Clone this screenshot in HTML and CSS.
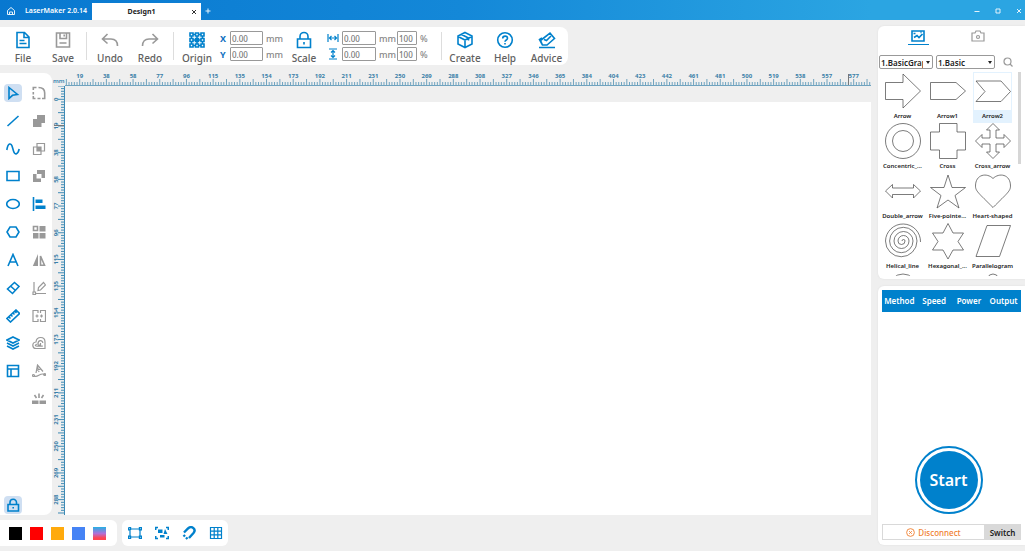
FILE: index.html
```
<!DOCTYPE html>
<html lang="en">
<head>
<meta charset="UTF-8" />
<meta name="viewport" content="width=device-width, initial-scale=1" />
<title>LaserMaker 2.0.14</title>
<link rel="stylesheet" href="styles.css">
</head>
<body>

<header class="titlebar">
  <button class="title-button home" aria-label="Home">
    <svg viewBox="0 0 10 10" width="10" height="10"><path d="M1.500 4.500L5 1.500l3.500 3V8.500h-7zM3.500 8.500V6h3v2.500"/></svg>
  </button>
  <h1 class="app-name">LaserMaker 2.0.14</h1>
  <div class="tab">
    <span class="tab-name">Design1</span>
    <button class="tab-close" aria-label="Close tab"><svg viewBox="0 0 6 6" width="6" height="6"><path d="M1 1l4 4M5 1L1 5"/></svg></button>
  </div>
  <button class="title-button add" aria-label="New tab"><svg viewBox="0 0 6 6" width="6" height="6"><path d="M3 .500v5M.500 3h5"/></svg></button>
  <div class="window-buttons">
    <button class="title-button" aria-label="Minimize"><svg viewBox="0 0 6 6" width="6" height="6"><path d="M.500 3.500h5"/></svg></button>
    <button class="title-button" aria-label="Maximize"><svg viewBox="0 0 6 6" width="6" height="6"><path d="M1 1h4v4H1z"/></svg></button>
    <button class="title-button" aria-label="Close"><svg viewBox="0 0 6 6" width="6" height="6"><path d="M1 1l4 4M5 1L1 5"/></svg></button>
  </div>
</header>

<div class="app">
  <main class="main">

    <!-- top toolbar -->
    <div class="toolbar">
      <button class="tool">
        <svg class="blue" viewBox="0 0 18 18" width="18" height="18"><path d="M3 1.500h7.500L15 6v10.500H3zM10 2v4.500h4.500M5.500 9.500h5M5.500 12.500h7"/></svg>
        File
      </button>
      <button class="tool">
        <svg class="grey" viewBox="0 0 18 18" width="18" height="18"><path d="M2.500 2h13v14h-13zM6 2v5.500h6.500V2M5.500 12h7M10.200 3.500v2"/></svg>
        Save
      </button>
      <span class="separator"></span>
      <button class="tool">
        <svg class="grey" viewBox="0 0 18 18" width="18" height="18"><path d="M6.500 3L1.500 8l5 4.500M2 8h8c4 0 6.500 2.500 6.500 7"/></svg>
        Undo
      </button>
      <button class="tool">
        <svg class="grey" viewBox="0 0 18 18" width="18" height="18"><path d="M11.500 3l5 5-5 4.500M16 8H8c-4 0-6.500 2.500-6.500 7"/></svg>
        Redo
      </button>
      <span class="separator"></span>
      <button class="tool">
        <svg class="blue" viewBox="0 0 18 18" width="18" height="18"><path d="M2 2h3v3H2zM7.500 2h3v3h-3zM13 2h3v3h-3zM2 7.500h3v3H2zM13 7.500h3v3h-3zM2 13h3v3H2zM7.500 13h3v3h-3zM13 13h3v3h-3zM5 3.500h2.500M10.500 3.500H13M5 9h8M5 14.500h2.500M10.500 14.500H13M3.500 5v2.500M3.500 10.500V13M14.500 5v2.500M14.500 10.500V13M9 5v8"/><path class="solid" d="M7.500 7.500h3v3h-3z"/></svg>
        Origin
      </button>
      <div class="fields position">
        <label for="pos-x">X</label><input id="pos-x" class="wide" value="0.00"><span>mm</span>
        <label for="pos-y">Y</label><input id="pos-y" class="wide" value="0.00"><span>mm</span>
      </div>
      <button class="tool">
        <svg class="blue" viewBox="0 0 18 18" width="18" height="18"><path d="M2.500 8h13v8.500h-13zM5 8V5.500a4 4 0 0 1 8 0V8M9 11v2.500"/></svg>
        Scale
      </button>
      <div class="fields size">
        <label for="width" aria-label="Width"><svg class="blue thin" viewBox="0 0 12 12" width="12" height="12"><path d="M1 2v8M11 2v8M2.500 6h7M4.500 4l-2 2 2 2M7.500 4l2 2-2 2"/></svg></label>
        <input id="width" class="wide" value="0.00"><span>mm</span>
        <input class="narrow" aria-label="Width percent" value="100"><span>%</span>
        <label for="height" aria-label="Height"><svg class="blue thin" viewBox="0 0 12 12" width="12" height="12"><path d="M2 1h8M2 11h8M6 2.500v7M4 4.500l2-2 2 2M4 7.500l2 2 2-2"/></svg></label>
        <input id="height" class="wide" value="0.00"><span>mm</span>
        <input class="narrow" aria-label="Height percent" value="100"><span>%</span>
      </div>
      <span class="separator"></span>
      <button class="tool">
        <svg class="blue" viewBox="0 0 18 18" width="18" height="18"><path d="M9 1.500l7 3.500v8l-7 3.500L2 13V5zM2 5.500L9 9l7-3.500M9 9v7.500M5.500 3.500l7 3.500v2.500"/></svg>
        Create
      </button>
      <button class="tool">
        <svg class="blue" viewBox="0 0 18 18" width="18" height="18"><circle cx="9" cy="9" r="7.300"/><path d="M6.700 7.500c0-3.200 4.800-3 4.800-.2 0 1.700-2.500 1.700-2.500 3.500M9 12v1.500"/></svg>
        Help
      </button>
      <button class="tool last">
        <svg class="blue" viewBox="0 0 18 18" width="18" height="18"><path d="M1 16.500h16M4.500 14L1.500 8.500 4 7M2.500 9.500L12 2l4.500 5.500L9 14H4.500zM6 8.500l2.500 1 4.500-4.500"/></svg>
        Advice
      </button>
    </div>

    <div class="workspace">
      <!-- drawing tools -->
      <div class="side-tools">
        <div class="tool-grid">
          <button class="icon active" aria-label="Select"><svg class="blue" viewBox="0 0 14 14" width="14" height="14"><path d="M3 1.500l8.500 7-5 .800L3 12.500z"/></svg></button>
          <button class="icon" aria-label="Round corner"><svg class="grey" viewBox="0 0 14 14" width="14" height="14"><path d="M6.500 1.500c4.500 0 6.200 2 6.200 5.500v5.500H10M4.500 1.500H1.300v2.500M1.300 6v2.500M1.300 10v2.500H3.500M5.500 12.500h3"/></svg></button>
          <button class="icon" aria-label="Line"><svg class="blue" viewBox="0 0 14 14" width="14" height="14"><path d="M1.500 12L12.500 2"/></svg></button>
          <button class="icon" aria-label="Union"><svg class="grey" viewBox="0 0 14 14" width="14" height="14"><path class="fill" d="M5 1h8v8H9.500v4H1V5h4z"/></svg></button>
          <button class="icon" aria-label="Curve"><svg class="blue" viewBox="0 0 14 14" width="14" height="14"><path d="M.800 8C2 1 5 0 6.500 5.500l1 3.500c1.500 5 4.500 3 5.700-2"/></svg></button>
          <button class="icon" aria-label="Intersect"><svg class="grey thin" viewBox="0 0 14 14" width="14" height="14"><path d="M5 1.500h7.500V9H5zM1.500 5H9v7.500H1.500z"/><path class="fill" d="M5 5h4v4H5z"/></svg></button>
          <button class="icon" aria-label="Rectangle"><svg class="blue" viewBox="0 0 14 14" width="14" height="14"><path d="M1 2.500h12v9H1z"/></svg></button>
          <button class="icon" aria-label="Subtract"><svg class="grey" viewBox="0 0 14 14" width="14" height="14"><path class="fill" d="M5 1h8v8H9.500V5H5zM1 5h3.500v4.500H9V13H1z"/></svg></button>
          <button class="icon" aria-label="Ellipse"><svg class="blue" viewBox="0 0 14 14" width="14" height="14"><ellipse cx="7" cy="7" rx="6.300" ry="4.500"/></svg></button>
          <button class="icon" aria-label="Align"><svg class="blue" viewBox="0 0 14 14" width="14" height="14"><path d="M1.500 0v14"/><path class="fill" d="M3.500 2.500h7V6h-7zM3.500 8.500h10V12h-10z"/></svg></button>
          <button class="icon" aria-label="Polygon"><svg class="blue" viewBox="0 0 14 14" width="14" height="14"><path d="M4 2h6l3 5-3 5H4L1 7z"/></svg></button>
          <button class="icon" aria-label="Array"><svg class="grey" viewBox="0 0 14 14" width="14" height="14"><path d="M1.500 1.500h4v4h-4z"/><path class="fill" d="M7.500 1h6v5.500h-6zM1 8h5.500v5.500H1zM7.500 8h6v5.500h-6z"/></svg></button>
          <button class="icon" aria-label="Text"><svg class="blue" viewBox="0 0 14 14" width="14" height="14"><path d="M2 13L7 1.500 12 13M4 9h6"/></svg></button>
          <button class="icon" aria-label="Mirror"><svg class="grey" viewBox="0 0 14 14" width="14" height="14"><path class="fill" d="M6 1v12H.800z"/><path d="M8.500 3v9.300h4z"/></svg></button>
          <button class="icon" aria-label="Eraser"><svg class="blue" viewBox="0 0 14 14" width="14" height="14"><path d="M8.500 1.500l4.500 4-6.500 7L1.500 8zM4.500 5l5 4.500"/></svg></button>
          <button class="icon" aria-label="Edit nodes"><svg class="grey thin" viewBox="0 0 14 14" width="14" height="14"><path d="M2 1v10M3.500 12.500H14M1 11h2.500v2.500H1zM6 9.500l.500-3 5-5L13.500 4l-5 5z"/></svg></button>
          <button class="icon" aria-label="Ruler"><svg class="blue" viewBox="0 0 14 14" width="14" height="14"><path d="M10 1l3.500 3.500L4.500 13 1 9.500zM5 6l1.500 1.500M7 4l1.500 1.500M9 2.500L10.500 4M3 8l1.500 1.500"/></svg></button>
          <button class="icon" aria-label="Split"><svg class="grey thin" viewBox="0 0 14 14" width="14" height="14"><path d="M6 4V1.500H1v11h5V10M8.500 4V1.500h5v11h-5V10M3.500 7h3M8 7h3M5 5.500v3M9.500 5.500v3"/></svg></button>
          <button class="icon" aria-label="Layers"><svg class="blue" viewBox="0 0 14 14" width="14" height="14"><path d="M7 1l6 3-6 3-6-3zM1 7l6 3 6-3M1 10l6 3 6-3"/></svg></button>
          <button class="icon" aria-label="Offset"><svg class="grey thin" viewBox="0 0 14 14" width="14" height="14"><path d="M13 12.500H4C0 12.500-.500 6.500 4 6c.500-6 9-6 9 0zM10.800 10.200H5C2.500 10.200 3 8 6 8c0-4.500 4.800-4 4.800-1M6 9.200h2.500V7"/></svg></button>
          <button class="icon" aria-label="Table"><svg class="blue" viewBox="0 0 14 14" width="14" height="14"><path d="M1.500 1.500h11v11h-11zM1.500 5h11M5 5v7.500"/></svg></button>
          <button class="icon" aria-label="Text on path"><svg class="grey thin" viewBox="0 0 14 14" width="14" height="14"><path d="M4 9L5.500 1 11 7.500M4.500 6.500L9 5M5.500 3L7 8M2 12c4 2 6-4 11-1.500"/><circle cx="1.500" cy="11.500" r="1"/><circle cx="12.700" cy="10.500" r="1"/></svg></button>
          <span></span>
          <button class="icon" aria-label="Break"><svg class="grey" viewBox="0 0 14 14" width="14" height="14"><path class="fill" d="M0 8.500h6.500V12H0zM7.500 8.500H14V12H7.500z"/><path d="M7 1.500v4.500M2.500 3l2 3M11.500 3l-2 3"/></svg></button>
        </div>
        <button class="icon active" aria-label="Lock"><svg class="blue" viewBox="0 0 14 14" width="14" height="14"><path d="M2 6.500h10.500v6.500H2zM4 6.500V4.500a3.200 3.200 0 0 1 6.500 0v2M7.200 9v1.500"/></svg></button>
      </div>

      <div class="board">
        <span class="unit">mm</span>
        <svg class="ruler-top" id="ruler-top"></svg>
        <svg class="ruler-left" id="ruler-left"></svg>
        <div class="canvas"></div>
      </div>
    </div>

    <!-- bottom bars -->
    <footer class="bottom">
      <div class="swatches">
        <button class="swatch black" aria-label="Black"></button>
        <button class="swatch red" aria-label="Red"></button>
        <button class="swatch orange" aria-label="Orange"></button>
        <button class="swatch blue-fill" aria-label="Blue"></button>
        <button class="swatch rainbow" aria-label="More colours"></button>
      </div>
      <div class="view-tools">
        <button class="view" aria-label="Frame"><svg class="blue thin" viewBox="0 0 14 14" width="14" height="14"><path d="M2 3h10v8H2zM.600 1.500h2V4M.600 1.500V4h2M11.400 1.500h2V4h-2zM.600 10h2v2.500h-2zM11.400 10h2v2.500h-2z"/></svg></button>
        <button class="view" aria-label="Select all"><svg class="blue" viewBox="0 0 14 14" width="14" height="14"><path d="M.700 4V1.500H3M11 1.500h2.300V4M.700 10v2.500H3M11 12.500h2.300V10"/><path class="fill" d="M3 3.500h4.500V7H3zM10 3l2.500 5h-4zM5 9h4.500v2.500H5z"/></svg></button>
        <button class="view" aria-label="Snap"><svg class="blue heavy" viewBox="0 0 14 14" width="14" height="14"><path d="M2 6.500l4-4c4-3.500 8.500 1 5.500 4.500L7 12M1.500 9l1.500 1.500M4 11.500L5.500 13"/></svg></button>
        <button class="view" aria-label="Grid"><svg class="blue thin" viewBox="0 0 14 14" width="14" height="14"><path d="M1.500 1.500h11v11h-11zM5.200 1.500v11M8.800 1.500v11M1.500 5.200h11M1.500 8.800h11"/></svg></button>
      </div>
    </footer>
  </main>

  <aside class="sidebar">
    <section class="library">
      <div class="library-tabs">
        <button class="library-tab current" aria-label="Graphics"><svg class="blue" viewBox="0 0 14 12" width="14" height="12"><path d="M1 1h12v10H1zM3 7.500l3-2 2 2L11.500 4M2.500 3.500h2M9.500 2.500h1"/></svg></button>
        <button class="library-tab" aria-label="Camera"><svg class="grey thin" viewBox="0 0 14 12" width="14" height="12"><path d="M1 3h3l1-2h4l1 2h3v8H1z"/><circle cx="7" cy="7" r="1.500"/></svg></button>
      </div>
      <div class="filters">
        <span class="select first"><select aria-label="Library"><option>1.BasicGraphics</option></select></span>
        <span class="select second"><select aria-label="Category"><option>1.Basic</option></select></span>
        <button class="search" aria-label="Search"><svg class="grey thin" viewBox="0 0 10 10" width="10" height="10"><circle cx="4.500" cy="4.500" r="3.500"/><path d="M7 7l2.500 2.500"/></svg></button>
      </div>
      <div class="shape-scroll">
        <div class="shapes">
          <button class="shape"><svg viewBox="0 0 36 36"><path d="M.500 9.500h17.500V1l17.500 17L18 35v-8.500H.500z"/></svg><span>Arrow</span></button>
          <button class="shape"><svg viewBox="0 0 36 36"><path d="M.500 9.500H26l9.500 8.500-9.500 8.500H.500z"/></svg><span>Arrow1</span></button>
          <button class="shape selected"><svg viewBox="0 0 36 36"><path d="M1 8h25l9.500 10.500L26 28.500H1l9-10z"/></svg><span>Arrow2</span></button>
          <button class="shape"><svg viewBox="0 0 36 36"><circle cx="18" cy="18" r="17.500"/><circle cx="18" cy="18" r="10.500"/></svg><span>Concentric_...</span></button>
          <button class="shape"><svg viewBox="0 0 36 36"><path d="M9.500.500h17.500v8.500h8.500v18H27v8.500H9.500V27H.500V9h9z"/></svg><span>Cross</span></button>
          <button class="shape"><svg viewBox="0 0 36 36"><path d="M18 .500l6.500 6.500H21v8h8v-3.500l6.500 6.500-6.500 6.500V21h-8v8h3.500L18 35.500 11.500 29H15v-8H7v3.500L.500 18 7 11.500V15h8V7h-3.500z"/></svg><span>Cross_arrow</span></button>
          <button class="shape"><svg viewBox="0 0 36 36"><path d="M.500 18l7-6.500v3.500h21v-3.500l7 6.500-7 7v-3.500h-21V25z"/></svg><span>Double_arrow</span></button>
          <button class="shape"><svg viewBox="0 0 36 36"><path d="M18 2l4 12.500h13.500L25 22.500 29 35l-11-8-11 8 4-12.500L.500 14.500H14z"/></svg><span>Five-pointe...</span></button>
          <button class="shape"><svg viewBox="0 0 36 36"><path d="M18 5.500C12-.500.500 1 .500 13c0 5 3 7 17.500 21.500C32.500 20 35.500 18 35.500 13 35.500 1 24-.500 18 5.500z"/></svg><span>Heart-shaped</span></button>
          <button class="shape"><svg viewBox="0 0 36 36"><path d="M17 18A1.500 1.500 0 0 1 20 18A3.500 3.500 0 0 1 13 18A5.500 5.500 0 0 1 24 18A7.500 7.500 0 0 1 9 18A9.500 9.500 0 0 1 28 18A11.700 11.700 0 0 1 4.600 18A13.700 13.700 0 0 1 32 18A15.700 15.700 0 0 1 .500 18A17.500 17.500 0 0 1 35.500 19"/></svg><span>Helical_line</span></button>
          <button class="shape"><svg viewBox="0 0 36 36"><path d="M18 .500l5 9.500h10.500L28 18.500 33.500 27H23l-5 9-5-9H2.500L8 18.500 2.500 10H13z"/></svg><span>Hexagonal_...</span></button>
          <button class="shape"><svg viewBox="0 0 36 36"><path d="M12 2.500h23.500L24.500 33.500H1z"/></svg><span>Parallelogram</span></button>
          <button class="shape" aria-label="Circle"><svg viewBox="0 0 36 36"><ellipse cx="18" cy="15" rx="14" ry="14"/></svg></button>
          <span></span>
          <button class="shape" aria-label="Drop"><svg viewBox="0 0 36 36"><path d="M14.500 2q3.500-2 7 0L35 30H1z"/></svg></button>
        </div>
        <div class="scrollbar"></div>
      </div>
    </section>

    <section class="job">
      <table class="layers">
        <thead><tr><th>Method</th><th>Speed</th><th>Power</th><th>Output</th></tr></thead>
      </table>
      <button class="start"><span>Start</span></button>
      <div class="connection">
        <span class="status"><svg viewBox="0 0 10 10" width="9" height="9"><circle cx="5" cy="5" r="4.300"/><path d="M3.500 3.500l3 3M6.500 3.500l-3 3"/></svg>Disconnect</span>
        <button class="switch">Switch</button>
      </div>
    </section>
  </aside>
</div>

<script src="ruler.js"></script>
</body>
</html>
```
FILE: styles.css
```
* {
  margin: 0; padding: 0; box-sizing: border-box;
}
html, body {
  height: 100%;
}
body {
  display: flex;
  flex-direction: column;
  background: #efefef;
  font-family: "Noto Sans", "Open Sans", sans-serif;
  overflow: hidden;
}
button {
  border: 0;
  background: none;
  font-family: inherit;
  cursor: pointer;
}
svg {
  display: block;
  fill: none;
  stroke: currentColor;
  stroke-width: 1.6;
}
.blue { color: #0081cc; }
.grey { color: #999; }
.thin { stroke-width: 1.2; }
.heavy { stroke-width: 2.4; }
.fill { fill: currentColor; stroke: none; }
.solid { fill: currentColor; }

/* Title bar */
.titlebar {
  display: flex;
  align-items: center;
  height: 20px;
  padding-top: 2px;
  flex-shrink: 0;
  background: linear-gradient(to right, #0878d0, #1488d8 45%, #2ba5e2 85%);
  color: #fff;
}
.title-button {
  display: flex;
  align-items: center;
  justify-content: center;
  color: #e4f2fb;
}
.title-button svg, .tab-close svg {
  stroke-width: 1;
}
.home {
  width: 22px;
  margin-right: 3px;
}
.app-name {
  width: 67px;
  font-size: 7px;
  line-height: 10px;
  font-weight: 600;
  white-space: nowrap;
}
.tab {
  display: flex;
  align-items: center;
  align-self: flex-end;
  width: 109px;
  height: 17px;
  padding-right: 4px;
  background: #fff;
  color: #222;
}
.tab-name {
  flex: 1;
  text-align: center;
  font-size: 7px;
  line-height: 10px;
  font-weight: 700;
}
.tab-close {
  color: #333;
}
.add {
  width: 14px;
}
.window-buttons {
  display: flex;
  gap: 15px;
  margin-left: auto;
  padding-right: 3px;
}

.app {
  display: flex;
  flex: 1;
  min-height: 0;
}
.main {
  display: flex;
  flex-direction: column;
  flex: 1;
  min-width: 0;
  padding: 7px 7px 5px 0;
}

/* Toolbar */
.toolbar {
  display: flex;
  align-items: center;
  align-self: flex-start;
  height: 38px;
  padding-left: 3px;
  background: #fff;
  border-radius: 0 8px 8px 0;
}
.tool {
  display: flex;
  flex-direction: column;
  align-items: center;
  gap: 3px;
  width: 40px;
  padding-top: 3px;
  font-size: 10px;
  line-height: 13px;
  font-weight: 500;
  color: #606060;
}
.last {
  width: 43px;
}
.separator {
  width: 1px;
  height: 28px;
  margin: 0 3px;
  background: #ddd;
}
.fields {
  display: grid;
  align-items: center;
  gap: 2px 3px;
  font-size: 9px;
  line-height: 13px;
  font-weight: 500;
  color: #888;
}
.position {
  grid-template-columns: 7px 33px 15px;
  padding: 0 3px;
}
.position label {
  font-size: 9px;
  font-weight: 700;
  color: #0d6fc0;
}
.size {
  grid-template-columns: 12px 34px 15px 20px 9px;
  padding: 0 9px 0 3px;
}
.fields input {
  width: 100%;
  height: 14px;
  padding: 0 1px;
  border: 1px solid #999;
  border-radius: 1px;
  background: #fff;
  font-family: inherit;
  font-size: 8px;
  font-weight: 500;
  color: #777;
}

/* Left tools */
.workspace {
  display: flex;
  flex: 1;
  min-height: 0;
  margin-top: 8px;
}
.side-tools {
  display: flex;
  flex-direction: column;
  justify-content: space-between;
  width: 52px;
  padding: 11px 4px 1px;
  background: #fff;
  border-radius: 0 8px 8px 0;
}
.tool-grid {
  display: grid;
  grid-template-columns: 18px 18px;
  grid-auto-rows: 18px;
  column-gap: 8px;
  align-content: space-between;
  height: 324px;
}
.icon {
  display: flex;
  align-items: center;
  justify-content: center;
  width: 18px;
  height: 18px;
  border-radius: 4px;
}
.icon.active {
  background: #cfdff2;
}

/* Rulers and canvas */
.board {
  display: grid;
  grid-template-columns: 13px 1fr;
  grid-template-rows: 13px 1fr;
  flex: 1;
  min-width: 0;
}
.unit {
  align-self: end;
  padding-left: 1px;
  font-size: 6px;
  line-height: 10px;
  font-weight: 600;
  color: #2f7fae;
}
.ruler-top, .ruler-left {
  width: 100%;
  height: 100%;
  overflow: hidden;
  stroke-width: 1;
}
.ruler-top { color: #6fa3bf; }
.ruler-left { color: #3f8bb5; }
.ruler-top text, .ruler-left text {
  stroke: none;
  fill: #3b7fa8;
  font-size: 6px;
  font-weight: 700;
  text-anchor: middle;
}
.cursor-mark {
  stroke: #777;
}
.canvas {
  margin-top: 16px;
  background: #fff;
}

/* Bottom bars */
.bottom {
  display: flex;
  gap: 5px;
  height: 26px;
  margin-top: 5px;
}
.swatches, .view-tools {
  display: flex;
  align-items: center;
  background: #fff;
}
.swatches {
  gap: 8px;
  padding: 0 11px 0 9px;
  border-radius: 0 6px 6px 0;
}
.view-tools {
  gap: 13px;
  padding: 0 5px 0 6px;
  border-radius: 6px;
}
.swatch {
  width: 13px;
  height: 13px;
}
.black { background: #000; }
.red { background: #f00; }
.orange { background: #ffaa0d; }
.blue-fill { background: #4583f5; }
.rainbow { background: linear-gradient(#26b0e4, #b070d8 50%, #ff4450 85%); }

/* Sidebar */
.sidebar {
  display: flex;
  flex-direction: column;
  gap: 7px;
  width: 147px;
  flex-shrink: 0;
  padding: 6px 0;
}
.library, .job {
  display: flex;
  flex-direction: column;
  background: #fff;
  border-radius: 6px 0 0 6px;
  box-shadow: 0 0 2px #ddd;
}
.library {
  height: 253px;
  padding-bottom: 3px;
}
.library-tabs {
  display: flex;
  justify-content: center;
  gap: 39px;
  padding: 4px 7px 0 0;
}
.library-tab {
  display: flex;
  justify-content: center;
  width: 21px;
  height: 15px;
}
.library-tab.current {
  border-bottom: 1px solid #0081cc;
}
.filters {
  display: flex;
  align-items: center;
  gap: 3px;
  padding: 10px 0 3px 1px;
}
.select {
  position: relative;
}
.select::after {
  content: "";
  position: absolute;
  top: 6px; right: 3px;
  border: 2px solid transparent;
  border-top: 3px solid #222;
  border-bottom: 0;
  pointer-events: none;
}
.select select {
  appearance: none;
  display: block;
  width: 100%;
  height: 14px;
  padding: 0 9px 0 1px;
  border: 1px solid #999;
  border-radius: 2px;
  background: #fff;
  font-family: inherit;
  font-size: 8px;
  font-weight: 600;
  color: #222;
}
.first { width: 54px; }
.second { width: 59px; }
.search {
  margin-left: 5px;
}
.shape-scroll {
  display: flex;
  flex: 1;
  justify-content: space-between;
  min-height: 0;
  padding: 0 4px 0 2px;
  overflow: hidden;
}
.shapes {
  display: grid;
  grid-template-columns: repeat(3, 45px);
  grid-auto-rows: 50px;
  justify-items: center;
}
.shape {
  display: flex;
  flex-direction: column;
  align-items: center;
  width: 39px;
  height: 50px;
  padding-top: 1px;
  color: #444;
}
.shape svg {
  width: 36px;
  height: 36px;
  flex-shrink: 0;
  stroke-width: 0.7;
}
.shape span {
  display: flex;
  justify-content: center;
  width: 100%;
  margin-top: 1px;
  font-size: 6px;
  line-height: 13px;
  font-weight: 600;
  white-space: nowrap;
  color: #222;
}
.shape.selected {
  box-shadow: inset 0 0 0 1px #e3f2fe;
}
.selected span {
  background: #e3f2fe;
}
.scrollbar {
  width: 3px;
  height: 92px;
  background: #d6d6d6;
}

.job {
  flex: 1;
  align-items: center;
  padding: 4px 4px 5px;
}
.layers {
  width: 100%;
  border-collapse: collapse;
  table-layout: fixed;
}
.layers th {
  height: 22px;
  padding-bottom: 1px;
  background: #0081cc;
  color: #fff;
  font-size: 8px;
  font-weight: 600;
  text-align: center;
}
.start {
  width: 68px;
  height: 68px;
  margin: auto 6px 10px 0;
  padding: 3px;
  border: 2px solid #0081cc;
  border-radius: 50%;
}
.start span {
  display: block;
  border-radius: 50%;
  background: #0081cc;
  color: #fff;
  font-size: 16px;
  line-height: 58px;
  font-weight: 600;
}
.connection {
  display: flex;
  width: 100%;
  height: 16px;
  background: #d9d9d9;
  padding: 1px 0 1px 1px;
}
.status {
  display: flex;
  align-items: center;
  justify-content: center;
  gap: 3px;
  flex: 1;
  background: #fff;
  color: #f08030;
  font-size: 8px;
  font-weight: 500;
}
.status svg {
  stroke-width: 1;
}
.switch {
  width: 37px;
  font-size: 8px;
  font-weight: 600;
  color: #222;
}
```
FILE: ruler.js
```
// each labelled step is ten small ticks wide
const STEP = 26.69;
const UNIT = 19.22;
const NS = 'http://www.w3.org/2000/svg';

function add(svg, tag, attrs, text) {
  const el = document.createElementNS(NS, tag);
  for (const key in attrs) el.setAttribute(key, attrs[key]);
  if (text !== undefined) el.textContent = text;
  svg.appendChild(el);
}

function drawTop() {
  const svg = document.getElementById('ruler-top');
  const width = svg.clientWidth;
  const zero = -12;
  let d = 'M0 12.5H' + width;
  svg.innerHTML = '';
  for (let i = 5; zero + i * STEP / 10 < width; i++) {
    const x = zero + i * STEP / 10;
    d += 'M' + x + ' 12V' + (i % 5 ? 9 : 6);
    if (i % 10 === 0) {
      add(svg, 'text', { x: x, y: 5 }, Math.round(i / 10 * UNIT));
    }
  }
  add(svg, 'path', { d: d });
  add(svg, 'path', { d: 'M783.5 1V12', class: 'cursor-mark' });
}

function drawLeft() {
  const svg = document.getElementById('ruler-left');
  const height = svg.clientHeight;
  const zero = 13.3;
  let d = 'M12.5 0V' + height;
  svg.innerHTML = '';
  for (let i = -5; zero + i * STEP / 10 < height; i++) {
    const y = zero + i * STEP / 10;
    d += 'M12 ' + y + 'H' + (i % 5 ? 9 : 6);
    if (i % 10 === 0) {
      add(svg, 'text', { transform: 'translate(6 ' + y + ') rotate(-90)' }, Math.round(i / 10 * UNIT));
    }
  }
  add(svg, 'path', { d: d });
  add(svg, 'path', { d: 'M2 39.5H12', class: 'cursor-mark' });
}

function draw() {
  drawTop();
  drawLeft();
}
window.addEventListener('resize', draw);
draw();
```
